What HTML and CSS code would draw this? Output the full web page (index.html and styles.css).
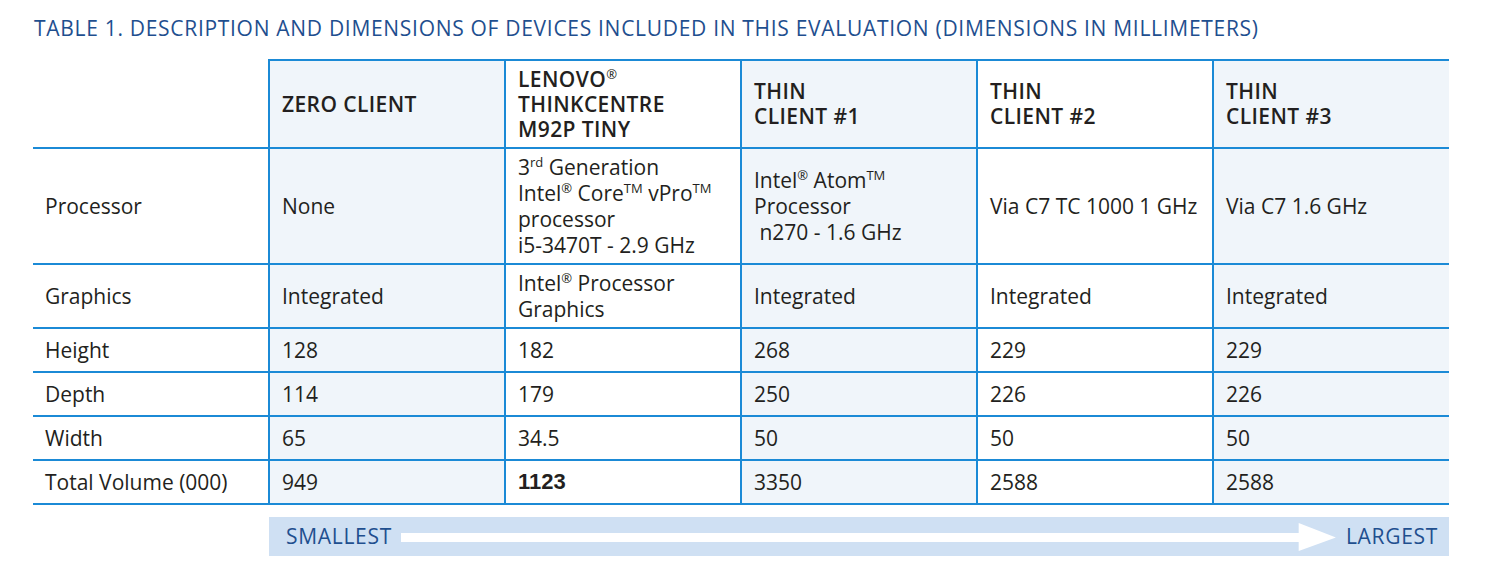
FILE: index.html
```html
<!DOCTYPE html>
<html>
<head>
<meta charset="utf-8">
<link rel="stylesheet" href="styles.css">
</head>
<body>
<div class="page">
  <h1 class="title">TABLE 1. DESCRIPTION AND DIMENSIONS OF DEVICES INCLUDED IN THIS EVALUATION (DIMENSIONS IN MILLIMETERS)</h1>
  <table class="spec">
    <colgroup>
      <col class="c-label"><col class="c-shade"><col class="c-plain"><col class="c-shade"><col class="c-plain"><col class="c-shade">
    </colgroup>
    <thead>
      <tr class="r-head">
        <th class="corner"></th>
        <th class="shade">ZERO CLIENT</th>
        <th>LENOVO<sup class="reg">®</sup><br>THINKCENTRE<br>M92P TINY</th>
        <th class="shade">THIN<br>CLIENT #1</th>
        <th>THIN<br>CLIENT #2</th>
        <th class="shade">THIN<br>CLIENT #3</th>
      </tr>
    </thead>
    <tbody>
      <tr class="r-proc">
        <td class="label">Processor</td>
        <td class="shade">None</td>
        <td>3<sup class="ord">rd</sup> Generation<br>Intel<sup class="reg">®</sup> Core<sup class="tm">TM</sup> vPro<sup class="tm">TM</sup><br>processor<br>i5-3470T - 2.9 GHz</td>
        <td class="shade">Intel<sup class="reg">®</sup> Atom<sup class="tm">TM</sup><br>Processor<br>&nbsp;n270 - 1.6 GHz</td>
        <td>Via C7 TC 1000 1 GHz</td>
        <td class="shade">Via C7 1.6 GHz</td>
      </tr>
      <tr class="r-gfx">
        <td class="label">Graphics</td>
        <td class="shade">Integrated</td>
        <td>Intel<sup class="reg">®</sup> Processor<br>Graphics</td>
        <td class="shade">Integrated</td>
        <td>Integrated</td>
        <td class="shade">Integrated</td>
      </tr>
      <tr class="r-one">
        <td class="label">Height</td>
        <td class="shade">128</td>
        <td>182</td>
        <td class="shade">268</td>
        <td>229</td>
        <td class="shade">229</td>
      </tr>
      <tr class="r-one">
        <td class="label">Depth</td>
        <td class="shade">114</td>
        <td>179</td>
        <td class="shade">250</td>
        <td>226</td>
        <td class="shade">226</td>
      </tr>
      <tr class="r-one">
        <td class="label">Width</td>
        <td class="shade">65</td>
        <td>34.5</td>
        <td class="shade">50</td>
        <td>50</td>
        <td class="shade">50</td>
      </tr>
      <tr class="r-one">
        <td class="label">Total Volume (000)</td>
        <td class="shade">949</td>
        <td class="best">1123</td>
        <td class="shade">3350</td>
        <td>2588</td>
        <td class="shade">2588</td>
      </tr>
    </tbody>
  </table>
  <div class="scale">
    <span class="scale-text">SMALLEST</span>
    <svg class="arrow" viewBox="0 0 930 39" preserveAspectRatio="none" aria-hidden="true">
      <rect x="0" y="16" width="894" height="9" fill="#ffffff"/>
      <polygon points="893,6 930,20.5 893,34" fill="#ffffff"/>
    </svg>
    <span class="scale-text">LARGEST</span>
  </div>
</div>
</body>
</html>
```

FILE: styles.css
```css
html, body {
  margin: 0;
  padding: 0;
  background: #ffffff;
}

body {
  font-family: "Open Sans", Lato, "Liberation Sans", sans-serif;
  color: #231f20;
}

.page {
  padding: 15px 0 0 33px;
  width: 1416px;
}

.title {
  margin: 0 0 0 1px;
  font-weight: 400;
  font-size: 21px;
  line-height: 26px;
  letter-spacing: 0.7px;
  color: #1f4f8f;
  white-space: nowrap;
}

.spec {
  margin-top: 18px;
  width: 1416px;
  table-layout: fixed;
  border-collapse: collapse;
  font-size: 21px;
  line-height: 26px;
}

.spec col {
  width: 236px;
}

.spec th,
.spec td {
  padding: 0 4px 0 12px;
  text-align: left;
  vertical-align: middle;
  border-bottom: 2px solid #1b8ad6;
  border-left: 2px solid #1b8ad6;
  box-sizing: border-box;
  white-space: nowrap;
}

.spec th {
  font-weight: 600;
  font-size: 21px;
  line-height: 25px;
  letter-spacing: 0.4px;
  border-top: 2px solid #1b8ad6;
  color: #231f20;
}

.spec th.corner {
  border-top: none;
}

.spec .label,
.spec .corner {
  border-left: none;
}

.spec .shade {
  background: #f0f5fa;
}

.r-head { height: 88px; }
.r-proc { height: 116px; }
.r-gfx { height: 64px; }
.r-one { height: 44px; }

.spec .best {
  font-family: "Liberation Sans", Arial, sans-serif;
  font-size: 22px;
  font-weight: 700;
}

sup {
  line-height: 0;
}

sup.reg,
sup.tm,
sup.ord {
  font-size: 13px;
  font-weight: 400;
  letter-spacing: 0;
  vertical-align: 8px;
}

.scale {
  margin: 12px 0 0 236px;
  width: 1180px;
  height: 39px;
  background: #cfe0f3;
  display: flex;
  align-items: center;
  box-sizing: border-box;
  padding: 0 11px 0 17px;
}

.scale-text {
  font-size: 21px;
  letter-spacing: 0.7px;
  color: #1f4f8f;
  line-height: 39px;
  white-space: nowrap;
}

.arrow {
  flex: 1;
  height: 39px;
  margin: 0 10px 0 9px;
  display: block;
}
```
